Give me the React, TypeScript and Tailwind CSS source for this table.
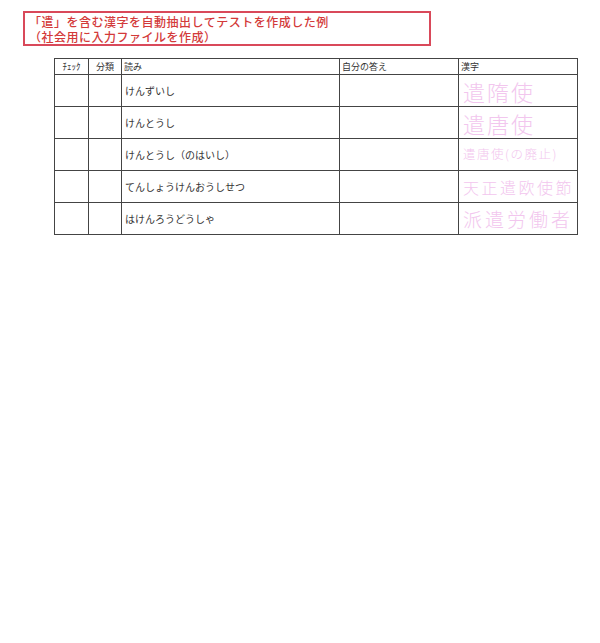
import React from "react";

const rows = [
  { yomi: "けんずいし", kanji: "遣隋使", cls: "text-[22px] tracking-[2px]" },
  { yomi: "けんとうし", kanji: "遣唐使", cls: "text-[22px] tracking-[2px]" },
  { yomi: "けんとうし（のはいし）", kanji: "遣唐使(の廃止)", cls: "text-[12.5px] tracking-[1.5px]" },
  { yomi: "てんしょうけんおうしせつ", kanji: "天正遣欧使節", cls: "text-[16px] tracking-[2.5px]" },
  { yomi: "はけんろうどうしゃ", kanji: "派遣労働者", cls: "text-[19px] tracking-[3px]" },
];

export default function App() {
  return (
    <div
      className="w-[600px] h-[643px] bg-white relative"
      style={{ fontFamily: '"Noto Sans CJK JP", "Noto Sans", sans-serif' }}
    >
      <div className="pt-[11px] pl-[23px]">
        <div className="w-[408px] h-[35px] border-2 border-[#d9495a] pl-[4px] pt-[1px] text-[#d33a3a] text-[12px] leading-[15px] font-medium tracking-[0.5px]">
          <div>「遣」を含む漢字を自動抽出してテストを作成した例</div>
          <div>（社会用に入力ファイルを作成）</div>
        </div>
      </div>
      <div className="pl-[54px] pt-[12px]">
        <table className="border-collapse border-[1.5px] border-[#555] text-[#333]">
          <thead>
            <tr className="h-[16px] text-[9px] leading-[10px]">
              <th className="w-[34px] border border-[#444] font-normal text-center">ﾁｪｯｸ</th>
              <th className="w-[33px] border border-[#444] font-normal text-center">分類</th>
              <th className="w-[218px] border border-[#444] font-normal text-left pl-[2px]">読み</th>
              <th className="w-[119px] border border-[#444] font-normal text-left pl-[2px]">自分の答え</th>
              <th className="w-[119px] border border-[#444] font-normal text-left pl-[2px]">漢字</th>
            </tr>
          </thead>
          <tbody>
            {rows.map((r) => (
              <tr key={r.yomi} className="h-[32px]">
                <td className="border border-[#444]"></td>
                <td className="border border-[#444]"></td>
                <td className="border border-[#444] pl-[3px] text-[10px] text-[#333]">{r.yomi}</td>
                <td className="border border-[#444]"></td>
                <td className={`border border-[#444] pl-[4px] text-[#f2c6ee] font-light leading-none whitespace-nowrap ${r.cls}`}>
                  {r.kanji}
                </td>
              </tr>
            ))}
          </tbody>
        </table>
      </div>
    </div>
  );
}
